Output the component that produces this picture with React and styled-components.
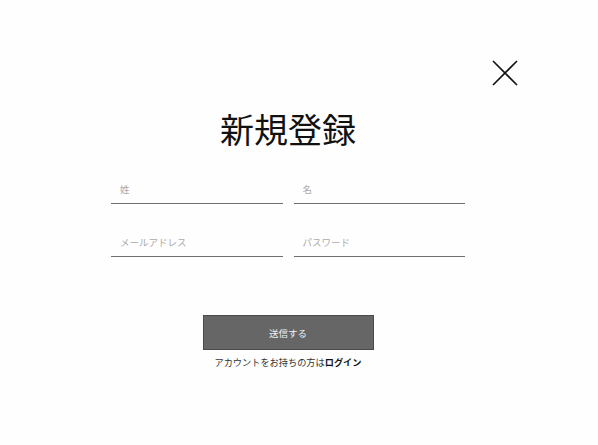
import React from "react";
import styled, { createGlobalStyle } from "styled-components";

const Global = createGlobalStyle`
  html, body { margin: 0; padding: 0; background: #fefefe; }
  body { font-family: "Noto Sans CJK JP", "Noto Sans", sans-serif; }
`;

const Page = styled.div`
  position: relative;
  width: 598px;
  height: 445px;
  box-sizing: border-box;
  padding-right: 22px;
  display: flex;
  flex-direction: column;
  align-items: center;
`;

const Close = styled.button`
  position: absolute;
  left: 491px;
  top: 59px;
  width: 28px;
  height: 28px;
  padding: 0;
  border: 0;
  background: transparent;
  cursor: pointer;
  display: flex;
`;

const Title = styled.h1`
  margin: 106px 0 0;
  font-size: 34px;
  line-height: 46px;
  font-weight: 400;
  color: #111;
  letter-spacing: 0;
`;

const Grid = styled.div`
  margin-top: 22px;
  width: 354px;
  display: grid;
  grid-template-columns: 1fr 1fr;
  column-gap: 11px;
  row-gap: 23px;
`;

const Field = styled.input`
  width: 100%;
  box-sizing: border-box;
  height: 30px;
  border: 0;
  border-bottom: 1px solid #6f6f6f;
  background: transparent;
  padding: 0 9px;
  font-family: inherit;
  font-size: 9.5px;
  color: #333;
  outline: none;
  &::placeholder { color: #aaa; }
`;

const Submit = styled.button`
  margin-top: 58px;
  width: 171px;
  height: 35px;
  background: #666;
  border: 1px solid #4a4a4a;
  color: #f2f2f2;
  font-family: inherit;
  font-size: 9.5px;
  cursor: pointer;
`;

const Foot = styled.p`
  margin: 5px 0 0;
  font-size: 9.2px;
  line-height: 14px;
  color: #333;
`;

const Strong = styled.a`
  font-weight: 700;
  color: #111;
  text-decoration: none;
`;

export default function App() {
  return (
    <>
      <Global />
      <Page>
        <Close aria-label="閉じる">
          <svg width="28" height="28" viewBox="0 0 28 28">
            <path d="M2 2 L26 26 M26 2 L2 26" stroke="#111" strokeWidth="1.6" fill="none" />
          </svg>
        </Close>
        <Title>新規登録</Title>
        <Grid>
          <Field placeholder="姓" />
          <Field placeholder="名" />
          <Field placeholder="メールアドレス" />
          <Field placeholder="パスワード" type="password" />
        </Grid>
        <Submit>送信する</Submit>
        <Foot>
          アカウントをお持ちの方は<Strong href="#">ログイン</Strong>
        </Foot>
      </Page>
    </>
  );
}
